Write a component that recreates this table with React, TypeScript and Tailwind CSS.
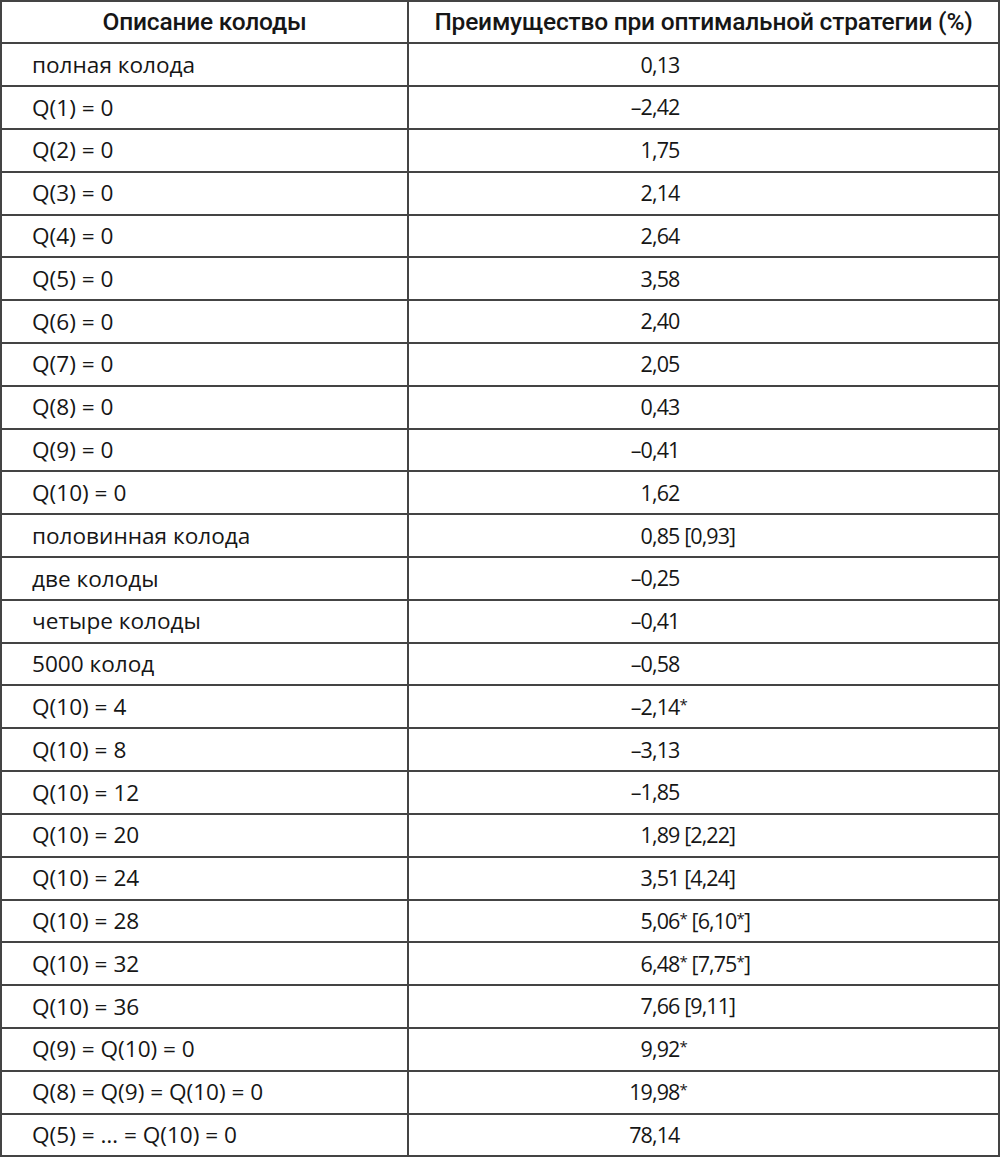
const rows: [string, string][] = [
  ["полная колода", "0,13"],
  ["Q(1) = 0", "–2,42"],
  ["Q(2) = 0", "1,75"],
  ["Q(3) = 0", "2,14"],
  ["Q(4) = 0", "2,64"],
  ["Q(5) = 0", "3,58"],
  ["Q(6) = 0", "2,40"],
  ["Q(7) = 0", "2,05"],
  ["Q(8) = 0", "0,43"],
  ["Q(9) = 0", "–0,41"],
  ["Q(10) = 0", "1,62"],
  ["половинная колода", "0,85 [0,93]"],
  ["две колоды", "–0,25"],
  ["четыре колоды", "–0,41"],
  ["5000 колод", "–0,58"],
  ["Q(10) = 4", "–2,14*"],
  ["Q(10) = 8", "–3,13"],
  ["Q(10) = 12", "–1,85"],
  ["Q(10) = 20", "1,89 [2,22]"],
  ["Q(10) = 24", "3,51 [4,24]"],
  ["Q(10) = 28", "5,06* [6,10*]"],
  ["Q(10) = 32", "6,48* [7,75*]"],
  ["Q(10) = 36", "7,66 [9,11]"],
  ["Q(9) = Q(10) = 0", "9,92*"],
  ["Q(8) = Q(9) = Q(10) = 0", "19,98*"],
  ["Q(5) = … = Q(10) = 0", "78,14"],
];

// asterisks sit small and high, like footnote marks
function Marked({ text }: { text: string }) {
  const parts = text.split("*");
  return (
    <>
      {parts.map((p, i) => (
        <span key={i}>
          {p}
          {i < parts.length - 1 && (
            <span className="relative -top-[5px] text-[15px]">*</span>
          )}
        </span>
      ))}
    </>
  );
}

function Value({ v }: { v: string }) {
  const idx = v.indexOf(",");
  const whole = v.slice(0, idx);
  const rest = v.slice(idx);
  return (
    <span className="whitespace-pre text-[21.5px] tracking-[-0.9px]">
      <span className="inline-block w-[60px] text-right">{whole}</span>
      <Marked text={rest} />
    </span>
  );
}

export default function App() {
  return (
    <div
      className="w-[1000px] bg-white text-[#161616]"
      style={{ fontFamily: '"Open Sans", "Noto Sans", sans-serif' }}
    >
      <div className="grid h-[44.3px] grid-cols-[407px_1fr] border-x-2 border-y-2 border-[#444]">
        <div
          className="flex items-center justify-center border-r-2 border-[#444] text-[24.5px] font-medium tracking-[-0.2px]"
          style={{ fontFamily: "Roboto, sans-serif" }}
        >
          Описание колоды
        </div>
        <div
          className="flex items-center justify-center text-[24.5px] font-medium tracking-[-0.2px]"
          style={{ fontFamily: "Roboto, sans-serif" }}
        >
          Преимущество при оптимальной стратегии (%)
        </div>
      </div>
      {rows.map(([name, v]) => (
        <div
          key={name}
          className="grid h-[42.82px] grid-cols-[407px_1fr] border-x-2 border-b-2 border-[#444] text-[22.6px]"
        >
          <div className="flex items-center border-r-2 border-[#444] pl-[30px]">
            {name}
          </div>
          <div className="flex items-center pl-[183px]">
            <Value v={v} />
          </div>
        </div>
      ))}
    </div>
  );
}
